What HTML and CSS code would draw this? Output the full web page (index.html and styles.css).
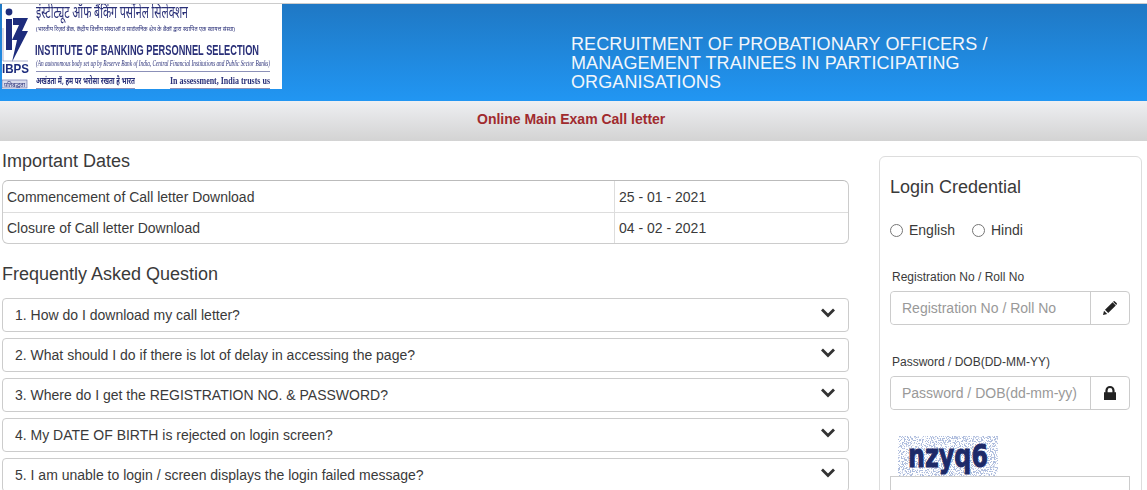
FILE: index.html
```html
<!DOCTYPE html>
<html lang="en">
  <head>
    <meta charset="UTF-8" />
    <meta name="viewport" content="width=device-width, initial-scale=1.0" />
    <title>Online Main Exam Call letter</title>
    <link rel="stylesheet" href="styles.css">
  </head>
  <body>
    <div class="header">
      <svg class="logo" viewBox="0 0 280 85" width="280" height="85">
        <rect width="280" height="85" fill="#fff" />
        <circle cx="7" cy="8" r="3.400" fill="#1d2c7c" />
        <path d="M4 15h6v31H4z" fill="#1d2c7c" />
        <path d="M11 14H26L20 27h6L10 58l5-22H10l7-15h-6z" fill="#1d2c7c" />
        <path d="M1 24v33h25" fill="none" stroke="#8b90b8" stroke-width=".7" />
        <text x="0" y="69" class="logo-ibps" textLength="27" lengthAdjust="spacingAndGlyphs">IBPS</text>
        <rect x="0" y="76" width="25" height="8" fill="#d9dcec" stroke="#5a64a0" stroke-width=".6" />
        <text x="2" y="83" class="logo-small" textLength="21" lengthAdjust="spacingAndGlyphs">प्रतिबद्धता</text>
        <text x="34" y="14" class="logo-hindi" textLength="152" lengthAdjust="spacingAndGlyphs">इंस्टीट्यूट ऑफ बैंकिंग पर्सोनेल सिलेक्शन</text>
        <text x="34" y="27" class="logo-small" textLength="199" lengthAdjust="spacingAndGlyphs">(भारतीय रिज़र्व बैंक, केंद्रीय वित्तीय संस्थाओं व सार्वजनिक क्षेत्र के बैंकों द्वारा स्थापित एक स्वायत्त संस्था)</text>
        <text x="33" y="51" class="logo-name" textLength="224" lengthAdjust="spacingAndGlyphs">INSTITUTE OF BANKING PERSONNEL SELECTION</text>
        <text x="34" y="62" class="logo-note" textLength="234" lengthAdjust="spacingAndGlyphs">(An autonomous body set up by Reserve Bank of India, Central Financial Institutions and Public Sector Banks)</text>
        <rect x="34" y="67" width="234" height="1" fill="#8b90b8" />
        <text x="34" y="80" class="logo-hindi-small" textLength="99" lengthAdjust="spacingAndGlyphs">अखंडता में, हम पर भरोसा रखता है भारत</text>
        <text x="168" y="80" class="logo-trust" textLength="100" lengthAdjust="spacingAndGlyphs">In assessment, India trusts us</text>
        <rect x="34" y="84" width="99" height="1" fill="#8b90b8" />
        <rect x="168" y="84" width="100" height="1" fill="#8b90b8" />
      </svg>
      <div class="header-title">RECRUITMENT OF PROBATIONARY OFFICERS / MANAGEMENT TRAINEES IN PARTICIPATING ORGANISATIONS</div>
    </div>
    <div class="subbar"><b>Online Main Exam Call letter</b></div>

    <div class="content">
      <div class="main">
        <h4 class="dates-title">Important Dates</h4>
        <table class="dates">
          <tr>
            <td class="dates-name">Commencement of Call letter Download</td>
            <td>25 - 01 - 2021</td>
          </tr>
          <tr>
            <td class="dates-name">Closure of Call letter Download</td>
            <td>04 - 02 - 2021</td>
          </tr>
        </table>

        <h4 class="faq-title">Frequently Asked Question</h4>
        <div class="faq">
          <div class="faq-item">
            <span>1. How do I download my call letter?</span>
            <svg class="chevron" viewBox="0 0 14 10"><path d="M1 1.500 7 7.500 13 1.500" /></svg>
          </div>
          <div class="faq-item">
            <span>2. What should I do if there is lot of delay in accessing the page?</span>
            <svg class="chevron" viewBox="0 0 14 10"><path d="M1 1.500 7 7.500 13 1.500" /></svg>
          </div>
          <div class="faq-item">
            <span>3. Where do I get the REGISTRATION NO. &amp; PASSWORD?</span>
            <svg class="chevron" viewBox="0 0 14 10"><path d="M1 1.500 7 7.500 13 1.500" /></svg>
          </div>
          <div class="faq-item">
            <span>4. My DATE OF BIRTH is rejected on login screen?</span>
            <svg class="chevron" viewBox="0 0 14 10"><path d="M1 1.500 7 7.500 13 1.500" /></svg>
          </div>
          <div class="faq-item">
            <span>5. I am unable to login / screen displays the login failed message?</span>
            <svg class="chevron" viewBox="0 0 14 10"><path d="M1 1.500 7 7.500 13 1.500" /></svg>
          </div>
        </div>
      </div>

      <div class="login">
        <h4 class="login-title">Login Credential</h4>
        <div class="lang">
          <label><input type="radio" name="lang" /> English</label>
          <label><input type="radio" name="lang" /> Hindi</label>
        </div>

        <label class="field-label">Registration No / Roll No</label>
        <div class="input-group">
          <input type="text" placeholder="Registration No / Roll No" />
          <span class="addon">
            <svg viewBox="0 0 14 14" width="14" height="14"><path d="M0 14l1-4.200 3.200 3.200zM2 8.800 9.600 1.200 12.800 4.400 5.200 12zM10.400.4a1.100 1.100 0 0 1 1.500 0l1.700 1.700a1.100 1.100 0 0 1 0 1.500l-.4.400L10 .8z" fill="#222" /></svg>
          </span>
        </div>

        <label class="field-label">Password / DOB(DD-MM-YY)</label>
        <div class="input-group">
          <input type="text" placeholder="Password / DOB(dd-mm-yy)" />
          <span class="addon">
            <svg viewBox="0 0 14 14" width="14" height="14"><path d="M1 6.200h1.400V4.400a4.600 4.400 0 0 1 9.200 0v1.800H13V14H1zM4.600 6.200h4.800V4.400a2.400 2.300 0 0 0-4.800 0z" fill="#222" /></svg>
          </span>
        </div>

        <svg class="captcha" viewBox="0 0 100 40" width="100" height="40">
          <filter id="speckle" x="0" y="0" width="100%" height="100%">
            <feTurbulence type="fractalNoise" baseFrequency="0.9" numOctaves="3" seed="4" />
            <feColorMatrix type="matrix" values="0 0 0 0 0.42  0 0 0 0 0.50  0 0 0 0 0.72  8 8 0 0 -8" />
          </filter>
          <rect width="100" height="40" fill="#fff" />
          <rect width="100" height="40" filter="url(#speckle)" />
          <text x="10" y="31" class="captcha-text" textLength="80" lengthAdjust="spacingAndGlyphs">nzyq6</text>
        </svg>
        <input class="captcha-input" type="text" />
      </div>
    </div>
  </body>
</html>
```

FILE: styles.css
```css
html,
body {
  height: 490px;
  overflow: hidden;
}

body {
  margin: 0;
  background-color: #fff;
  color: #3a3a3a;
  font-family: "Liberation Sans", Arial, sans-serif;
  font-size: 14px;
}

h4 {
  margin: 0;
  font-size: 18px;
  font-weight: 400;
  line-height: 20px;
}

.header {
  display: flex;
  height: 97px;
  padding-left: 2px;
  margin-top: 3px;
  border-top: 1px solid #ccc;
  background: linear-gradient(#1f78c4, #2196f3);
}

.logo {
  display: block;
  flex: none;
  filter: blur(0.35px);
}

.logo-hindi,
.logo-small,
.logo-hindi-small {
  font-family: "Noto Sans", "Noto Sans CJK SC", sans-serif;
  fill: #2a3078;
}

.logo-hindi {
  font-size: 17px;
}

.logo-small {
  font-size: 6px;
}

.logo-hindi-small {
  font-size: 9px;
  font-weight: 700;
}

.logo-name {
  font-size: 14px;
  font-weight: 700;
  fill: #2a3078;
}

.logo-note {
  font-family: "Liberation Serif", serif;
  font-size: 8px;
  font-style: italic;
  fill: #2a3078;
}

.logo-trust {
  font-family: "Liberation Serif", serif;
  font-size: 9.500px;
  font-weight: 700;
  fill: #2a3078;
}

.logo-ibps {
  font-size: 12px;
  font-weight: 700;
  fill: #1d2c7c;
}

.header-title {
  width: 440px;
  margin: 31px 0 0 289px;
  color: #f2f6fb;
  font-size: 18px;
  letter-spacing: 0.1px;
  line-height: 19px;
}

.subbar {
  height: 40px;
  padding-left: 477px;
  background: linear-gradient(#eeeff2, #d3d3d3);
  color: #a02a2e;
  line-height: 37px;
}

.content {
  display: flex;
  align-items: flex-start;
  padding: 0 5px 0 2px;
}

.main {
  width: 847px;
}

.dates-title {
  margin-top: 10px;
}

.dates {
  width: 100%;
  margin-top: 9px;
  border: 1px solid #ccc;
  border-top-color: #bbb;
  border-radius: 6px;
  border-collapse: separate;
  border-spacing: 0;
}

.dates td {
  height: 31px;
  padding: 0 4px;
  box-sizing: border-box;
}

.dates tr + tr td {
  border-top: 1px solid #ddd;
}

.dates-name {
  width: 612px;
  border-right: 1px solid #ddd;
}

.faq-title {
  margin-top: 20px;
}

.faq {
  display: flex;
  flex-direction: column;
  gap: 6px;
  margin-top: 14px;
}

.faq-item {
  display: flex;
  flex: none;
  align-items: center;
  justify-content: space-between;
  height: 34px;
  padding: 0 13px 0 12px;
  box-sizing: border-box;
  border: 1px solid #ccc;
  border-radius: 4px;
}

.chevron {
  width: 14px;
  height: 10px;
  margin-top: -4px;
  fill: none;
  stroke: #333;
  stroke-width: 2.800;
}

.login {
  width: 263px;
  height: 340px;
  flex: none;
  box-sizing: border-box;
  margin: 15px 0 0 30px;
  padding: 0 11px 0 10px;
  border: 1px solid #ddd;
  border-radius: 6px;
}

.login-title {
  margin-top: 20px;
}

.lang {
  display: flex;
  gap: 17px;
  margin-top: 24px;
  height: 18px;
  align-items: center;
}

.lang label {
  display: flex;
  align-items: center;
  gap: 6px;
}

.lang input {
  width: 13px;
  height: 13px;
  margin: 0;
}

.field-label {
  display: block;
  margin: 0 0 6px 2px;
  font-size: 12px;
  line-height: 16px;
}

.lang + .field-label {
  margin-top: 30px;
}

.input-group + .field-label {
  margin-top: 29px;
}

.input-group {
  display: flex;
  width: 240px;
  height: 34px;
  box-sizing: border-box;
  border: 1px solid #ccc;
  border-radius: 4px;
}

.input-group input {
  flex: 1;
  min-width: 0;
  padding: 0 11px;
  border: none;
  border-right: 1px solid #ccc;
  border-radius: 4px 0 0 4px;
  outline: none;
  color: #555;
  font-family: inherit;
  font-size: 14px;
}

.input-group input::placeholder {
  color: #999;
}

.addon {
  display: flex;
  flex: none;
  align-items: center;
  justify-content: center;
  width: 38px;
}

.captcha {
  display: block;
  margin: 26px 0 0 8px;
}

.captcha-text {
  font-family: "DejaVu Sans", sans-serif;
  font-size: 32px;
  font-weight: 700;
  fill: #1d2a68;
  stroke: #1d2a68;
  stroke-width: 1;
}

.captcha-input {
  display: block;
  width: 240px;
  height: 34px;
  box-sizing: border-box;
  border: 1px solid #ccc;
  outline: none;
}
```
